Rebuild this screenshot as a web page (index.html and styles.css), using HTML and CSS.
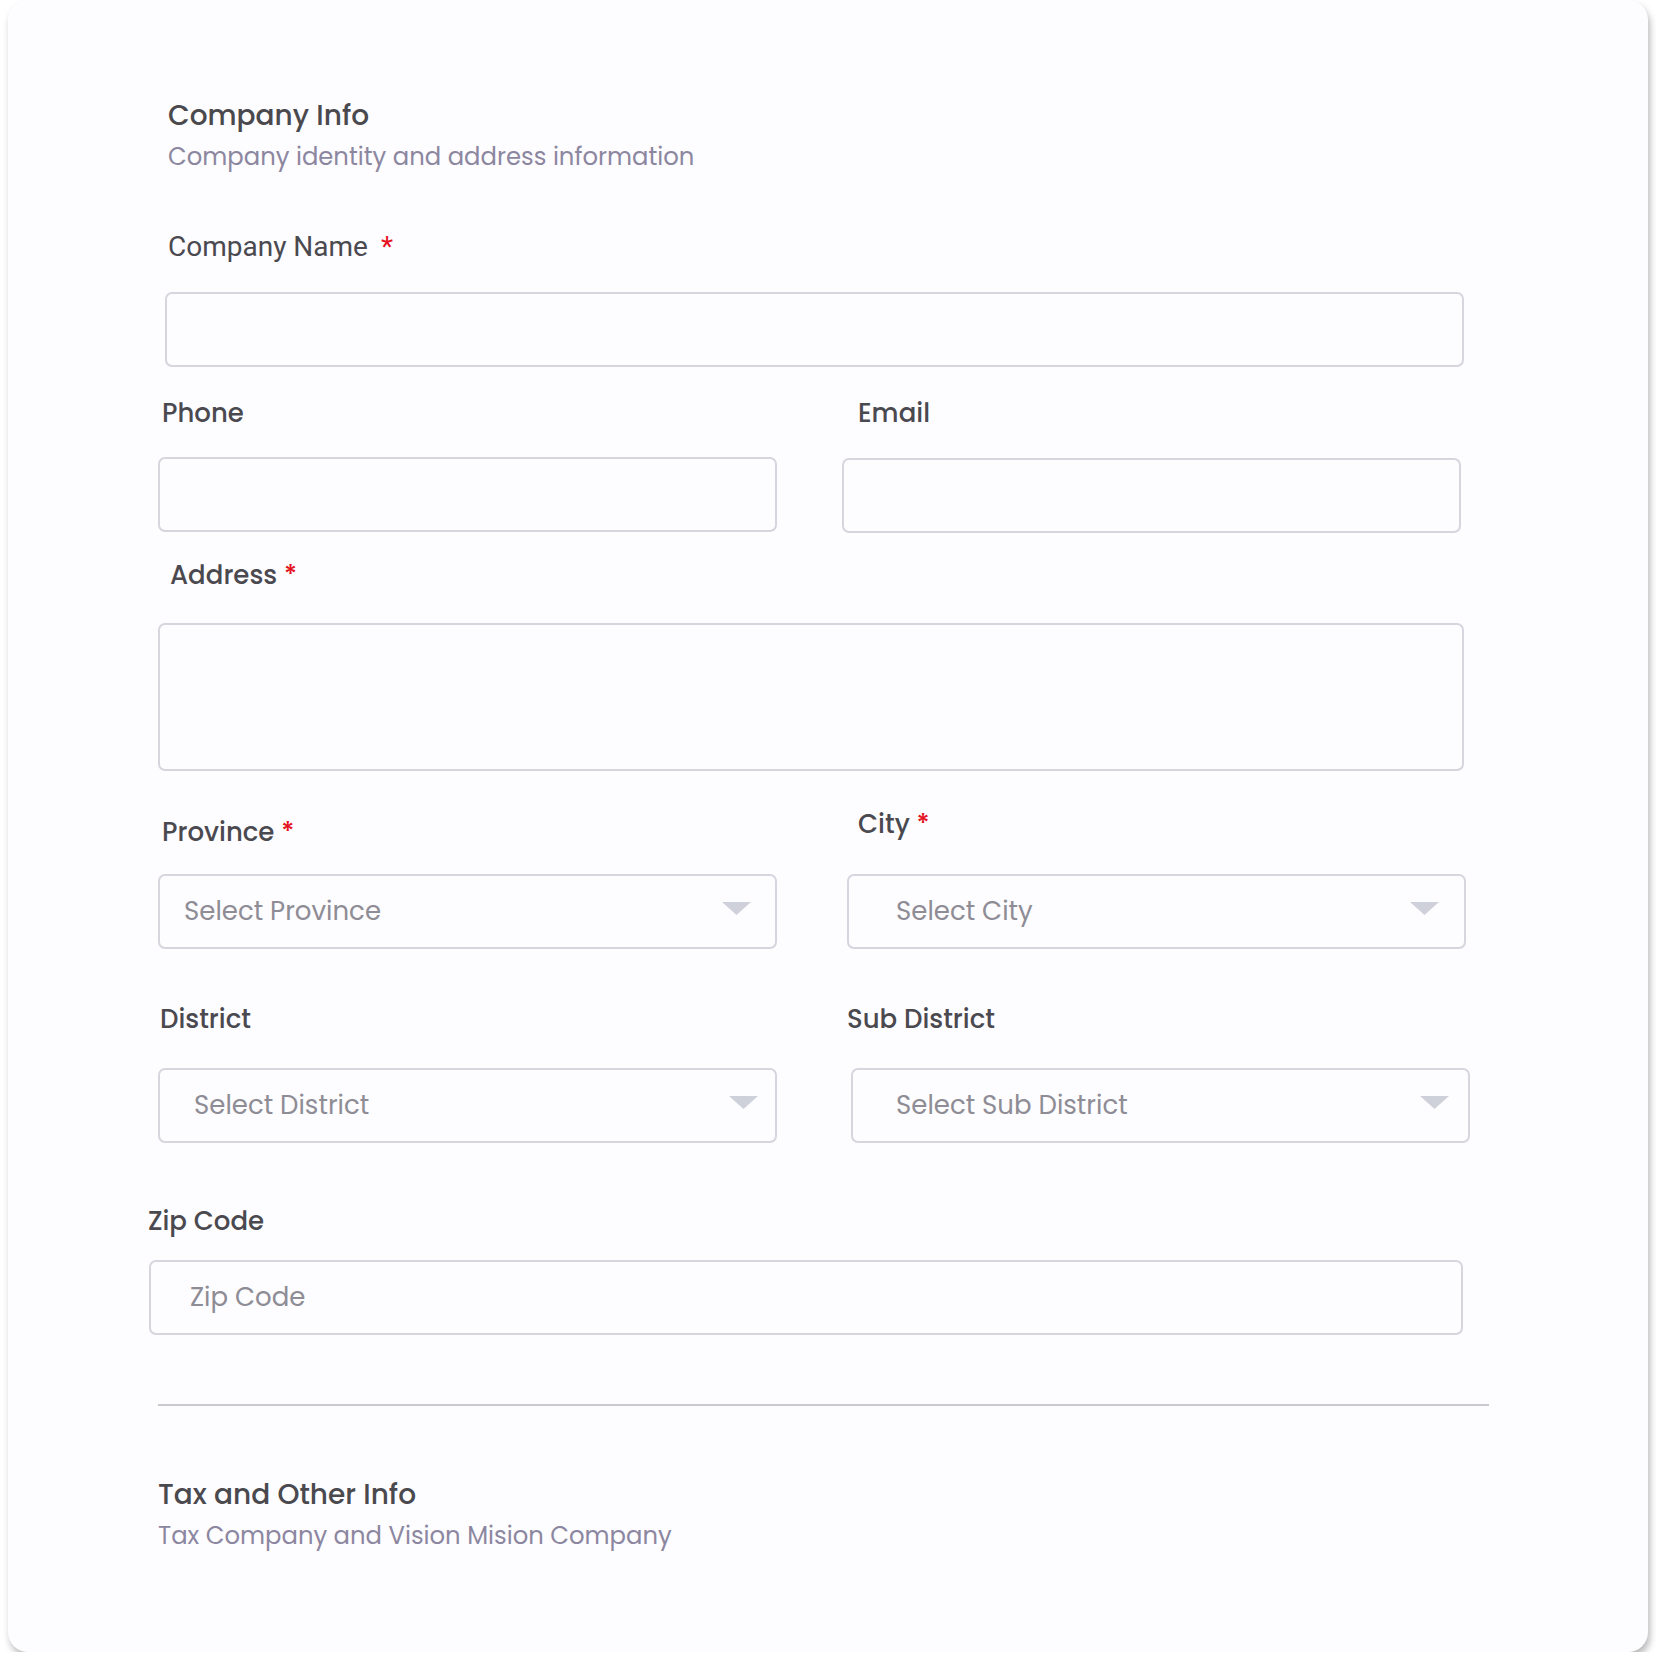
FILE: index.html
```html
<!DOCTYPE html>
<html lang="en">
<head>
  <meta charset="UTF-8">
  <title>Company Profile</title>
  <link rel="stylesheet" href="styles.css">
</head>
<body>
  <div class="card">
    <form class="form">
      <div class="section-head">
        <h2 class="section-title">Company Info</h2>
        <p class="section-sub">Company identity and address information</p>
      </div>

      <div class="field field-name">
        <label class="label label-name">Company Name <span class="req">*</span></label>
        <input class="control" type="text">
      </div>

      <div class="row row-contact">
        <div class="field">
          <label class="label label-phone">Phone</label>
          <input class="control" type="text">
        </div>
        <div class="field field-email">
          <label class="label label-email">Email</label>
          <input class="control" type="email">
        </div>
      </div>

      <div class="field field-address">
        <label class="label label-address">Address <span class="req">*</span></label>
        <textarea class="control control-area"></textarea>
      </div>

      <div class="row row-region">
        <div class="field">
          <label class="label label-province">Province <span class="req">*</span></label>
          <div class="select select-province">
            <span>Select Province</span>
            <svg class="caret" width="29" height="13" viewBox="0 0 29 13"><path d="M0 0h29L14.5 13z"/></svg>
          </div>
        </div>
        <div class="field field-city">
          <label class="label label-city">City <span class="req">*</span></label>
          <div class="select select-city">
            <span>Select City</span>
            <svg class="caret" width="29" height="13" viewBox="0 0 29 13"><path d="M0 0h29L14.5 13z"/></svg>
          </div>
        </div>
      </div>

      <div class="row row-district">
        <div class="field">
          <label class="label label-district">District</label>
          <div class="select select-district">
            <span>Select District</span>
            <svg class="caret" width="29" height="13" viewBox="0 0 29 13"><path d="M0 0h29L14.5 13z"/></svg>
          </div>
        </div>
        <div class="field field-sub">
          <label class="label label-sub">Sub District</label>
          <div class="select select-sub">
            <span>Select Sub District</span>
            <svg class="caret" width="29" height="13" viewBox="0 0 29 13"><path d="M0 0h29L14.5 13z"/></svg>
          </div>
        </div>
      </div>

      <div class="field field-zip">
        <label class="label">Zip Code</label>
        <input class="control control-zip" type="text" placeholder="Zip Code">
      </div>

      <hr class="divider">

      <div class="section-head section-tax">
        <h2 class="section-title">Tax and Other Info</h2>
        <p class="section-sub">Tax Company and Vision Mision Company</p>
      </div>
    </form>
  </div>
</body>
</html>
```

FILE: styles.css
```css
body {
  margin: 0;
  background-color: #ffffff;
  font-family: "Poppins", "Inter", "Noto Sans", sans-serif;
}

.card {
  margin: 0 8px;
  height: 1652px;
  box-sizing: border-box;
  background-color: #fdfcfe;
  border-radius: 20px;
  box-shadow: 2px 5px 7px rgba(0, 0, 0, 0.28);
  overflow: hidden;
}

.form {
  padding: 98px 0 0 150px;
  width: 1320px;
}

/* section headings */
.section-head {
  padding-left: 10px;
}

.section-title {
  margin: 0;
  font-size: 28px;
  line-height: 36px;
  font-weight: 500;
  color: #4a494e;
}

.section-sub {
  margin: 7px 0 0;
  font-size: 24.3px;
  line-height: 32px;
  color: #8c87a0;
}

.section-tax {
  padding-left: 0;
  margin-top: 71px;
}

.section-tax .section-sub {
  margin-top: 7px;
}

/* fields */
.field {
  display: flex;
  flex-direction: column;
}

.label {
  display: block;
  font-size: 26px;
  line-height: 32px;
  font-weight: 500;
  color: #4a494f;
  margin-bottom: 28px;
}

.req {
  color: #e5131f;
}

.control {
  box-sizing: border-box;
  height: 75px;
  border: 2px solid #d5d6de;
  border-radius: 7px;
  background-color: #fdfcfe;
  font-family: inherit;
  font-size: 26px;
  color: #48464d;
  outline: none;
}

.control::placeholder {
  color: #8e8c95;
}

.control-area {
  height: 148px;
  resize: none;
}

.row {
  display: grid;
  grid-template-columns: 619px 619px;
  column-gap: 65px;
}

.row .control,
.row .select {
  width: 619px;
}

/* Company Name */
.field-name {
  margin-top: 58px;
}

.field-name .control {
  margin-left: 7px;
  width: 1299px;
}

.label-name {
  padding-left: 10px;
  font-family: "Roboto", "Inter", sans-serif;
  font-size: 28px;
  font-weight: 400;
  margin-bottom: 29px;
}

.label-name .req {
  margin-left: 6px;
}

/* Phone / Email */
.row-contact {
  margin-top: 30px;
}

.label-phone {
  padding-left: 4px;
}

.label-email {
  padding-left: 16px;
}

.field-email .control {
  margin-top: 1px;
}

/* Address */
.field-address {
  margin-top: 26px;
}

.label-address {
  padding-left: 12px;
  margin-bottom: 32px;
}

.field-address .control {
  width: 1306px;
}

/* selects */
.select {
  box-sizing: border-box;
  height: 75px;
  display: flex;
  align-items: center;
  justify-content: space-between;
  border: 2px solid #d5d6de;
  border-radius: 7px;
  font-size: 26px;
  color: #8e8c95;
}

.caret {
  fill: #cfd1da;
  margin-top: -6px;
}

.row-region {
  margin-top: 45px;
}

.label-province {
  padding-left: 4px;
  margin-bottom: 26px;
}

.field-city {
  margin-left: 5px;
}

.label-city {
  padding-left: 11px;
  margin-top: -8px;
  margin-bottom: 34px;
}

.select-province {
  padding: 0 24px 0 24px;
}

.select-city {
  padding: 0 25px 0 47px;
}

.row-district {
  margin-top: 54px;
}

.label-district {
  padding-left: 2px;
  margin-bottom: 33px;
}

.field-sub {
  margin-left: 9px;
}

.label-sub {
  margin-left: -4px;
  margin-bottom: 33px;
}

.select-district {
  padding: 0 17px 0 34px;
}

.select-sub {
  padding: 0 19px 0 43px;
}

/* Zip code */
.field-zip {
  margin-top: 62px;
  margin-left: -10px;
}

.field-zip .label {
  margin-bottom: 23px;
}

.control-zip {
  width: 1314px;
  padding-left: 39px;
  margin-left: 1px;
}

.divider {
  margin: 69px 0 0;
  width: 1331px;
  border: none;
  border-top: 2px solid #c9c9ce;
}
```
